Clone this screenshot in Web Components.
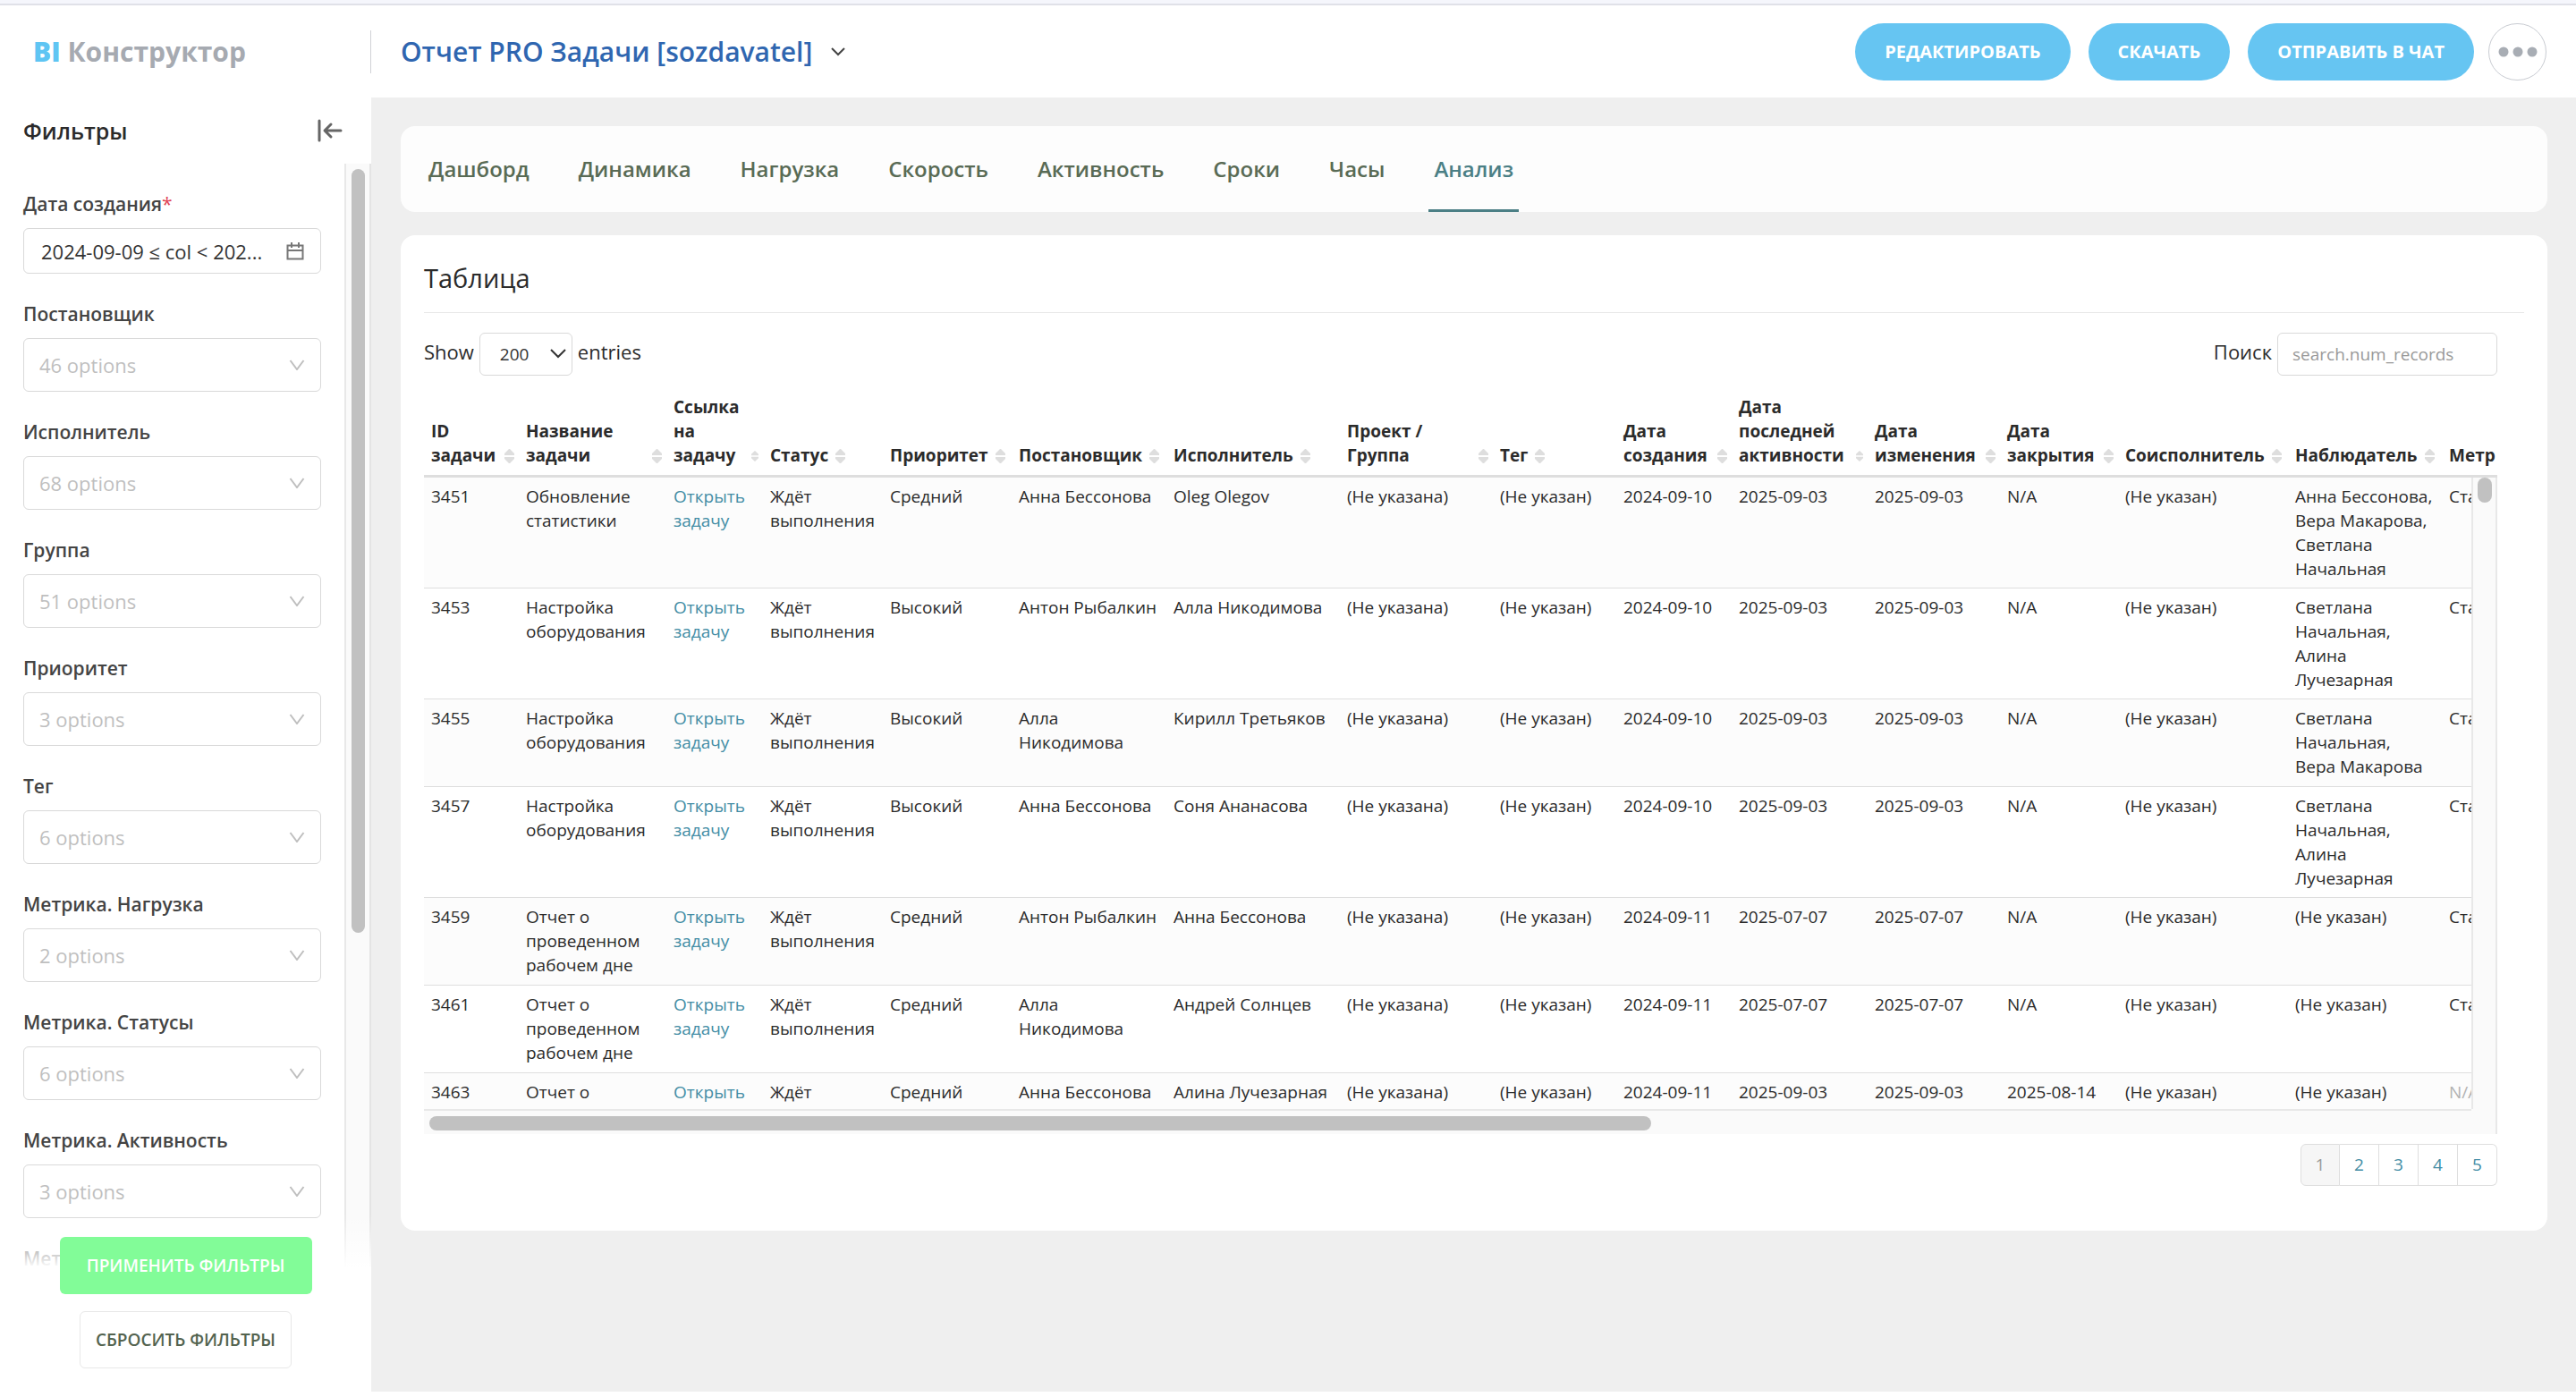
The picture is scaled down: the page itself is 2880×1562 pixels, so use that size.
<!DOCTYPE html>
<html lang="ru">
<head>
<meta charset="utf-8">
<title>BI Конструктор</title>
<style>
    body {
        margin: 0;
        font-family: "Open Sans", "Noto Sans", sans-serif;
        color: #2b2b2b;
        background: #fff;
    }
</style>
</head>
<body>
<bi-app></bi-app>

<script>
const filters = [
    ['Постановщик', '46 options'],
    ['Исполнитель', '68 options'],
    ['Группа', '51 options'],
    ['Приоритет', '3 options'],
    ['Тег', '6 options'],
    ['Метрика. Нагрузка', '2 options'],
    ['Метрика. Статусы', '6 options'],
    ['Метрика. Активность', '3 options'],
    ['Метрика. Сроки', '3 options'],
];

const tabs = ['Дашборд', 'Динамика', 'Нагрузка', 'Скорость', 'Активность', 'Сроки', 'Часы', 'Анализ'];

// title, column width
const columns = [
    ['ID задачи', 106],
    ['Название задачи', 165],
    ['Ссылка на задачу', 108],
    ['Статус', 134],
    ['Приоритет', 144],
    ['Постановщик', 173],
    ['Исполнитель', 194],
    ['Проект / Группа', 171],
    ['Тег', 138],
    ['Дата создания', 129],
    ['Дата последней активности', 152],
    ['Дата изменения', 148],
    ['Дата закрытия', 132],
    ['Соисполнитель', 190],
    ['Наблюдатель', 172],
    ['Метр', 200],
];

const open = 'Открыть задачу';
const wait = 'Ждёт выполнения';
const noGroup = '(Не указана)';
const none = '(Не указан)';
const rows = [
    ['3451', 'Обновление статистики', open, wait, 'Средний', 'Анна Бессонова', 'Oleg Olegov', noGroup, none, '2024-09-10', '2025-09-03', '2025-09-03', 'N/A', none, 'Анна Бессонова, Вера&nbsp;Макарова, Светлана Начальная', 'Ста'],
    ['3453', 'Настройка оборудования', open, wait, 'Высокий', 'Антон Рыбалкин', 'Алла Никодимова', noGroup, none, '2024-09-10', '2025-09-03', '2025-09-03', 'N/A', none, 'Светлана Начальная, Алина Лучезарная', 'Ста'],
    ['3455', 'Настройка оборудования', open, wait, 'Высокий', 'Алла Никодимова', 'Кирилл Третьяков', noGroup, none, '2024-09-10', '2025-09-03', '2025-09-03', 'N/A', none, 'Светлана Начальная, Вера&nbsp;Макарова', 'Ста'],
    ['3457', 'Настройка оборудования', open, wait, 'Высокий', 'Анна Бессонова', 'Соня Ананасова', noGroup, none, '2024-09-10', '2025-09-03', '2025-09-03', 'N/A', none, 'Светлана Начальная, Алина Лучезарная', 'Ста'],
    ['3459', 'Отчет о проведенном рабочем дне', open, wait, 'Средний', 'Антон Рыбалкин', 'Анна Бессонова', noGroup, none, '2024-09-11', '2025-07-07', '2025-07-07', 'N/A', none, none, 'Ста'],
    ['3461', 'Отчет о проведенном рабочем дне', open, wait, 'Средний', 'Алла Никодимова', 'Андрей Солнцев', noGroup, none, '2024-09-11', '2025-07-07', '2025-07-07', 'N/A', none, none, 'Ста'],
    ['3463', 'Отчет о', 'Открыть', 'Ждёт', 'Средний', 'Анна Бессонова', 'Алина Лучезарная', noGroup, none, '2024-09-11', '2025-09-03', '2025-09-03', '2025-08-14', none, none, 'N/A'],
];

class BiApp extends HTMLElement {
    constructor() {
        super();
        this.attachShadow({ mode: 'open' });
    }

    connectedCallback() {
        this.shadowRoot.innerHTML = `
        <style>
        :host {
            display: flex;
            flex-direction: column;
            box-sizing: border-box;
            min-height: 100vh;
            border-top: 4px solid #f5f6fc;
            padding-bottom: 6px;
        }
        .body {
            display: flex;
            flex: 1;
        }
        main {
            flex: 1;
            min-width: 0;
            display: flex;
            flex-direction: column;
            gap: 26px;
            padding: 32px 32px 32px 33px;
            background: #efefef;
        }
        </style>
        <app-header>Отчет PRO Задачи [sozdavatel]</app-header>
        <div class="body">
            <filter-panel></filter-panel>
            <main>
                <tab-bar></tab-bar>
                <chart-card heading="Таблица"><data-grid></data-grid></chart-card>
            </main>
        </div>`;
    }
}

class AppHeader extends HTMLElement {
    constructor() {
        super();
        this.attachShadow({ mode: 'open' });
    }

    connectedCallback() {
        this.shadowRoot.innerHTML = `
        <style>
        :host {
            display: flex;
            align-items: center;
            height: 103px;
            border-top: 2px solid #e0e1e8;
            background: #fff;
        }
        .logo {
            box-sizing: border-box;
            width: 414px;
            padding-left: 37px;
            font-size: 30px;
            font-weight: 700;
            color: #a6aab1;
            text-decoration: none;
        }
        .logo b {
            color: #5fc5f3;
        }
        .title {
            flex: 1;
            display: flex;
            align-items: center;
            gap: 20px;
            height: 48px;
            padding-left: 33px;
            border-left: 1px solid #d0d2d6;
        }
        h1 {
            margin: 0;
            font-size: 30px;
            font-weight: 600;
            color: #2f66b0;
        }
        nav {
            display: flex;
            gap: 20px;
            padding-right: 33px;
        }
        button {
            height: 64px;
            padding: 0 33px;
            border: 0;
            border-radius: 32px;
            background: #66c5f2;
            color: #fff;
            font: 700 20px "Open Sans", "Noto Sans", sans-serif;
        }
        .more {
            display: grid;
            place-items: center;
            width: 65px;
            padding: 0;
            margin-left: -4px;
            border: 1px solid #c9ccd2;
            background: #fff;
        }
        </style>
        <a class="logo" href="#"><b>BI</b> Конструктор</a>
        <div class="title">
            <h1><slot></slot></h1>
            <svg width="18" height="12" viewBox="0 0 18 12" fill="none" stroke="#444" stroke-width="2"><path d="M2 2l7 7 7-7"/></svg>
        </div>
        <nav>
            <button type="button">РЕДАКТИРОВАТЬ</button>
            <button type="button">СКАЧАТЬ</button>
            <button type="button">ОТПРАВИТЬ В ЧАТ</button>
            <button type="button" class="more" aria-label="Ещё">
                <svg width="44" height="12" viewBox="0 0 44 12" fill="#a8adb4"><circle cx="6" cy="6" r="5.5"/><circle cx="22" cy="6" r="5.5"/><circle cx="38" cy="6" r="5.5"/></svg>
            </button>
        </nav>`;
    }
}

class FilterPanel extends HTMLElement {
    constructor() {
        super();
        this.attachShadow({ mode: 'open' });
    }

    connectedCallback() {
        this.shadowRoot.innerHTML = `
        <style>
        :host {
            display: flex;
            flex-direction: column;
            width: 415px;
            background: #fff;
        }
        .head {
            display: flex;
            justify-content: space-between;
            align-items: center;
            height: 74px;
            padding: 0 32px 0 26px;
        }
        h2 {
            margin: 0;
            font-size: 25px;
            font-weight: 600;
        }
        .head button {
            padding: 0;
            border: 0;
            background: none;
        }
        svg {
            display: block;
        }
        .scroll {
            position: relative;
            display: flex;
            height: 1235px;
            overflow: hidden;
        }
        .list {
            flex: 1;
            min-width: 0;
            display: flex;
            flex-direction: column;
            gap: 30px;
            padding: 30px 26px 0;
        }
        .track {
            flex: none;
            box-sizing: border-box;
            width: 30px;
            padding: 6px 5px 0 6px;
            border-left: 2px solid #e8e8e8;
            border-right: 2px solid #e4e4e4;
            background: #fafafa;
        }
        .thumb {
            height: 854px;
            border-radius: 8px;
            background: #c1c1c1;
        }
        .fade {
            position: absolute;
            left: 0;
            right: 0;
            bottom: 0;
            height: 60px;
            background: linear-gradient(rgba(255, 255, 255, 0), #fff);
        }
        .actions {
            position: relative;
            display: flex;
            flex-direction: column;
            align-items: center;
            gap: 19px;
            margin-top: -35px;
        }
        .actions button {
            height: 64px;
            border-radius: 6px;
            font: 600 19px "Open Sans", "Noto Sans", sans-serif;
        }
        .apply {
            width: 282px;
            border: 0;
            background: #82fc98;
            color: #fff;
        }
        .reset {
            width: 237px;
            border: 1px solid #e8e8e8;
            background: #fff;
            color: #53634f;
        }
        </style>
        <div class="head">
            <h2>Фильтры</h2>
            <button type="button" aria-label="Свернуть">
                <svg width="28" height="26" viewBox="0 0 28 26" fill="none" stroke="#666" stroke-width="3" stroke-linecap="round" stroke-linejoin="round"><path d="M2 2v22M26 13H9M15 6l-7 7 7 7"/></svg>
            </button>
        </div>
        <div class="scroll">
            <div class="list">
                <filter-field label="Дата создания" value="2024-09-09 ≤ col &lt; 202..." required></filter-field>
                ${filters.map(([label, hint]) => `<filter-field label="${label}" placeholder="${hint}"></filter-field>`).join('')}
            </div>
            <div class="track"><div class="thumb"></div></div>
            <div class="fade"></div>
        </div>
        <div class="actions">
            <button type="button" class="apply">ПРИМЕНИТЬ ФИЛЬТРЫ</button>
            <button type="button" class="reset">СБРОСИТЬ ФИЛЬТРЫ</button>
        </div>`;
    }
}

class FilterField extends HTMLElement {
    constructor() {
        super();
        this.attachShadow({ mode: 'open' });
    }

    connectedCallback() {
        const value = this.getAttribute('value');
        const icon = value
            ? '<svg width="20" height="20" viewBox="0 0 20 20" fill="none" stroke="#777" stroke-width="2"><path d="M1.5 3.5h17v15h-17zM1.5 9h17M6 0v6M14 0v6"/></svg>'
            : '<svg width="18" height="12" viewBox="0 0 18 12" fill="none" stroke="#bfbfbf" stroke-width="2"><path d="M1.5 1l7.5 10 7.5-10"/></svg>';
        this.shadowRoot.innerHTML = `
        <style>
        :host {
            display: block;
        }
        label {
            display: block;
            margin-bottom: 12px;
            font-size: 21px;
            line-height: 30px;
            font-weight: 600;
            color: #444;
        }
        label span {
            color: #e04355;
            font-weight: 400;
        }
        .box {
            box-sizing: border-box;
            display: flex;
            align-items: center;
            height: 60px;
            padding: 0 17px;
            border: 1px solid #d9d9d9;
            border-radius: 6px;
        }
        .box.date {
            height: 51px;
            padding: 0 18px 0 19px;
        }
        input {
            flex: 1;
            min-width: 0;
            padding: 0;
            border: 0;
            outline: 0;
            background: none;
            color: #333;
            font: 22px "Open Sans", "Noto Sans", sans-serif;
        }
        input::placeholder {
            color: #bfbfbf;
            opacity: 1;
        }
        </style>
        <label for="field">${this.getAttribute('label')}${this.hasAttribute('required') ? '<span>*</span>' : ''}</label>
        <div class="box ${value ? 'date' : ''}">
            <input id="field" type="text" value="${value || ''}" placeholder="${this.getAttribute('placeholder') || ''}">
            ${icon}
        </div>`;
    }
}

class TabBar extends HTMLElement {
    constructor() {
        super();
        this.attachShadow({ mode: 'open' });
    }

    connectedCallback() {
        this.shadowRoot.innerHTML = `
        <style>
        :host {
            display: block;
            border-radius: 16px;
            background: #fdfdfd;
        }
        nav {
            display: flex;
            gap: 43px;
            height: 96px;
            padding: 0 25px;
        }
        a {
            box-sizing: border-box;
            padding: 0 6px;
            line-height: 96px;
            font-size: 24px;
            font-weight: 600;
            color: #596b55;
            text-decoration: none;
        }
        a.active {
            color: #4b7f85;
            border-bottom: 3px solid #4b7f85;
        }
        </style>
        <nav>
            ${tabs.map((tab) => `<a href="#" ${tab === 'Анализ' ? 'class="active"' : ''}>${tab}</a>`).join('')}
        </nav>`;
    }
}

class ChartCard extends HTMLElement {
    constructor() {
        super();
        this.attachShadow({ mode: 'open' });
    }

    connectedCallback() {
        this.shadowRoot.innerHTML = `
        <style>
        :host {
            display: block;
            padding: 26px 26px 50px;
            border-radius: 16px;
            background: #fff;
        }
        h2 {
            margin: 0 0 22px;
            padding-bottom: 16px;
            border-bottom: 1px solid #e8e8e8;
            font-size: 29px;
            line-height: 44px;
            font-weight: 400;
        }
        </style>
        <h2>${this.getAttribute('heading')}</h2>
        <slot></slot>`;
    }
}

class DataGrid extends HTMLElement {
    constructor() {
        super();
        this.attachShadow({ mode: 'open' });
    }

    headCell(title) {
        const size = title.length > 15 ? 8 : 11;
        return `<th ${title.includes(' ') ? '' : 'class="single"'}>
            <div><span>${title}</span><svg width="${size}" height="16" viewBox="0 0 11 16" fill="#dedede"><path d="M5 0h1l5 5v2H0V5zM5 16h1l5-5V9H0v2z"/></svg></div>
        </th>`;
    }

    cell(text, i) {
        if (i === 2) return `<td><a href="#">${text}</a></td>`;
        return `<td ${i === 15 && text === 'N/A' ? 'class="null"' : ''}>${text}</td>`;
    }

    connectedCallback() {
        const cols = `<colgroup>${columns.map(([, width]) => `<col style="width: ${width}px">`).join('')}</colgroup>`;
        this.shadowRoot.innerHTML = `
        <style>
        :host {
            display: block;
            margin-right: 30px;
            font-size: 19px;
            line-height: 27px;
        }
        .controls {
            display: flex;
            justify-content: space-between;
            font-size: 22px;
            line-height: 42px;
        }
        .controls label {
            display: flex;
            align-items: flex-start;
            gap: 6px;
        }
        select, input {
            box-sizing: border-box;
            height: 48px;
            border: 1px solid #d9d9d9;
            border-radius: 6px;
            background: #fff;
            color: #333;
            font: 19px "Open Sans", "Noto Sans", sans-serif;
        }
        .length {
            display: grid;
            align-items: center;
        }
        .length > * {
            grid-area: 1 / 1;
        }
        .length svg {
            justify-self: end;
            margin-right: 6px;
            pointer-events: none;
        }
        select {
            width: 104px;
            padding: 0 22px;
            appearance: none;
        }
        input {
            width: 246px;
            padding: 0 16px;
        }
        input::placeholder {
            color: #999;
            opacity: 1;
        }
        .head {
            overflow: hidden;
            margin-top: 20px;
            border-bottom: 3px solid #dedede;
        }
        table {
            width: 100%;
            table-layout: fixed;
            border-collapse: separate;
            border-spacing: 0;
        }
        th {
            padding: 2px 5px 8px 8px;
            text-align: left;
            vertical-align: bottom;
        }
        th div {
            display: flex;
            align-items: flex-end;
            justify-content: space-between;
        }
        th.single div {
            justify-content: flex-start;
            gap: 8px;
        }
        th svg {
            flex: none;
            margin-bottom: 5px;
        }
        .view {
            display: grid;
            grid-template-columns: 1fr 29px;
            grid-template-rows: 706px 28px;
            background: #fafafa;
            box-shadow: inset -2px 0 #e8e8e8;
        }
        .rows {
            overflow: hidden;
            background: #fff;
        }
        tr {
            height: 98px;
        }
        .head tr {
            height: auto;
        }
        td {
            padding: 8px 7px 7px 8px;
            border-bottom: 1px solid #dedede;
            vertical-align: top;
        }
        tr:nth-child(odd) td {
            background: #fcfcfc;
        }
        td a {
            color: #438da5;
            text-decoration: none;
        }
        .null {
            color: #b2b2b2;
        }
        .bar-y {
            padding-left: 5px;
            border-left: 2px solid #e8e8e8;
        }
        .bar-y div {
            width: 16px;
            height: 28px;
            border-radius: 8px;
            background: #c1c1c1;
        }
        .bar-x {
            padding: 6px;
            border-top: 2px solid #e8e8e8;
        }
        .bar-x div {
            width: 60%;
            height: 16px;
            border-radius: 8px;
            background: #c1c1c1;
        }
        .pages {
            display: flex;
            justify-content: flex-end;
            margin-top: 11px;
        }
        .pages a {
            box-sizing: border-box;
            width: 44px;
            height: 47px;
            border: 1px solid #dedede;
            border-left-width: 0;
            text-align: center;
            line-height: 45px;
            color: #438da5;
            text-decoration: none;
        }
        .pages a:first-child {
            border-left-width: 1px;
            border-radius: 6px 0 0 6px;
            background: #f6f6f6;
            color: #999;
        }
        .pages a:last-child {
            border-radius: 0 6px 6px 0;
        }
        </style>
        <div class="controls">
            <label>Show
                <span class="length">
                    <select><option>200</option></select>
                    <svg width="20" height="14" viewBox="0 0 20 14" fill="none" stroke="#333" stroke-width="2"><path d="M2 2l8 8 8-8"/></svg>
                </span>
                entries
            </label>
            <label>Поиск <input type="text" placeholder="search.num_records"></label>
        </div>
        <div class="head">
            <table>
                ${cols}
                <thead><tr>${columns.map(([title]) => this.headCell(title)).join('')}</tr></thead>
            </table>
        </div>
        <div class="view">
            <div class="rows">
                <table>
                    ${cols}
                    <tbody>${rows.map((row) => `<tr>${row.map((text, i) => this.cell(text, i)).join('')}</tr>`).join('')}</tbody>
                </table>
            </div>
            <div class="bar-y"><div></div></div>
            <div class="bar-x"><div></div></div>
        </div>
        <div class="pages">
            ${[1, 2, 3, 4, 5].map((n) => `<a href="#">${n}</a>`).join('')}
        </div>`;
    }
}

customElements.define('filter-field', FilterField);
customElements.define('filter-panel', FilterPanel);
customElements.define('app-header', AppHeader);
customElements.define('tab-bar', TabBar);
customElements.define('chart-card', ChartCard);
customElements.define('data-grid', DataGrid);
customElements.define('bi-app', BiApp);
</script>
</body>
</html>
